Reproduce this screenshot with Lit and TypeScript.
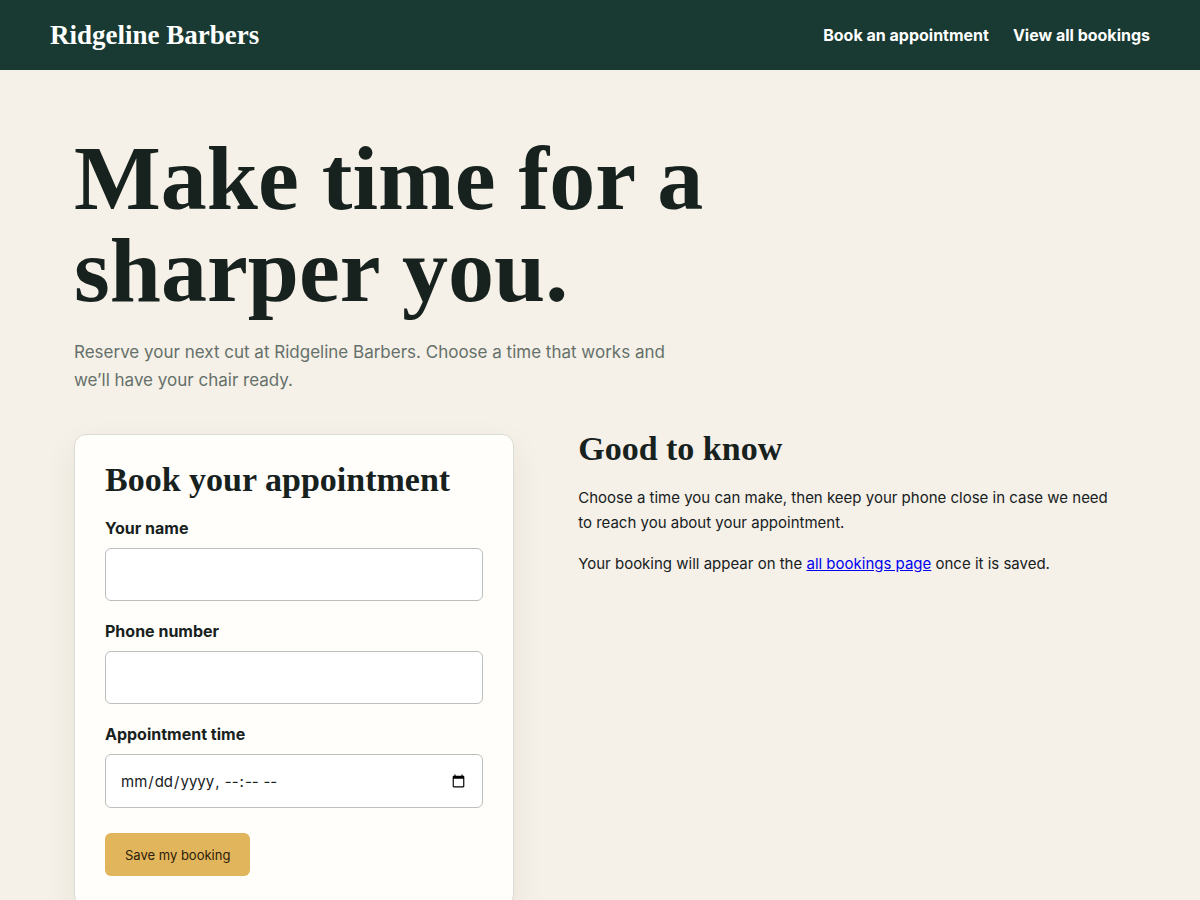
import { LitElement, html, css } from "lit";
import { customElement } from "lit/decorators.js";

@customElement("app-root")
export class AppRoot extends LitElement {
  static styles = css`
    :host {
      display: block;
      min-height: 100vh;
      background: #f5f0e8;
      color: #17211d;
      font: 15px/25px Inter, "Noto Sans", sans-serif;
    }
    .site-header {
      background: #183a32;
      color: #fff;
    }
    .bar {
      display: flex;
      align-items: center;
      justify-content: space-between;
      max-width: 1100px;
      height: 70px;
      margin: 0 auto;
    }
    .brand {
      color: inherit;
      font: bold 27px/32px "Liberation Serif", serif;
      text-decoration: none;
    }
    .nav {
      display: flex;
      gap: 24px;
    }
    .nav-link {
      color: inherit;
      font-weight: 700;
      font-size: 16px;
      text-decoration: none;
    }
    .page {
      max-width: 1052px;
      margin: 0 auto;
      padding: 62px 24px;
    }
    .title {
      max-width: 720px;
      margin: 0;
      font: bold 92px/92px "Liberation Serif", serif;
    }
    .lead {
      max-width: 620px;
      margin: 22px 0 40px;
      color: #65706a;
      font-size: 17px;
      line-height: 28px;
    }
    .columns {
      display: grid;
      grid-template-columns: 45fr 56fr;
      gap: 64px;
      align-items: start;
    }
    .card {
      padding: 30px;
      border: 1px solid #d8dcd3;
      border-radius: 12px;
      background: #fffefa;
      box-shadow: 0 12px 32px rgba(80, 70, 20, 0.07);
    }
    .heading {
      margin: 0 0 21px;
      font: bold 34px/30px "Liberation Serif", serif;
    }
    .form {
      display: grid;
      gap: 18px;
    }
    .field {
      display: grid;
      gap: 7px;
    }
    .label {
      font-weight: 700;
      font-size: 16px;
    }
    .input {
      box-sizing: border-box;
      width: 100%;
      height: 53px;
      padding: 13px 14px;
      border: 1px solid #bbbfbc;
      border-radius: 6px;
      background: #fff;
      color: inherit;
      font: inherit;
    }
    .input[type="datetime-local"] {
      height: 54px;
      padding: 12px 14px;
    }
    .save {
      justify-self: start;
      height: 43px;
      margin-top: 7px;
      padding: 0 20px;
      border: 0;
      border-radius: 6px;
      background: #e1b55b;
      color: #2c200a;
      font: 13px/16px Inter, "Noto Sans", sans-serif;
    }
    .text {
      max-width: 540px;
      margin: 0 0 16px;
    }
    .text-link {
      color: #0000ee;
    }
    @media (max-width: 1148px) {
      .bar {
        padding: 0 24px;
      }
    }
    @media (max-width: 760px) {
      .columns {
        grid-template-columns: 1fr;
      }
      .title {
        font-size: 56px;
        line-height: 58px;
      }
    }
  `;

  render() {
    return html`
      <header class="site-header">
        <div class="bar">
          <a class="brand" href="#">Ridgeline Barbers</a>
          <nav class="nav">
            <a class="nav-link" href="#book">Book an appointment</a>
            <a class="nav-link" href="#bookings">View all bookings</a>
          </nav>
        </div>
      </header>
      <main class="page">
        <h1 class="title">Make time for a sharper you.</h1>
        <p class="lead">
          Reserve your next cut at Ridgeline Barbers. Choose a time that works
          and we’ll have your chair ready.
        </p>
        <div class="columns">
          <section class="card" id="book">
            <h2 class="heading">Book your appointment</h2>
            <form class="form">
              <div class="field">
                <label class="label" for="name">Your name</label>
                <input class="input" id="name" type="text" />
              </div>
              <div class="field">
                <label class="label" for="phone">Phone number</label>
                <input class="input" id="phone" type="tel" />
              </div>
              <div class="field">
                <label class="label" for="time">Appointment time</label>
                <input class="input" id="time" type="datetime-local" />
              </div>
              <button class="save" type="submit">Save my booking</button>
            </form>
          </section>
          <aside>
            <h2 class="heading">Good to know</h2>
            <p class="text">
              Choose a time you can make, then keep your phone close in case we
              need to reach you about your appointment.
            </p>
            <p class="text">
              Your booking will appear on the
              <a class="text-link" href="#bookings">all bookings page</a> once
              it is saved.
            </p>
          </aside>
        </div>
      </main>
    `;
  }
}
